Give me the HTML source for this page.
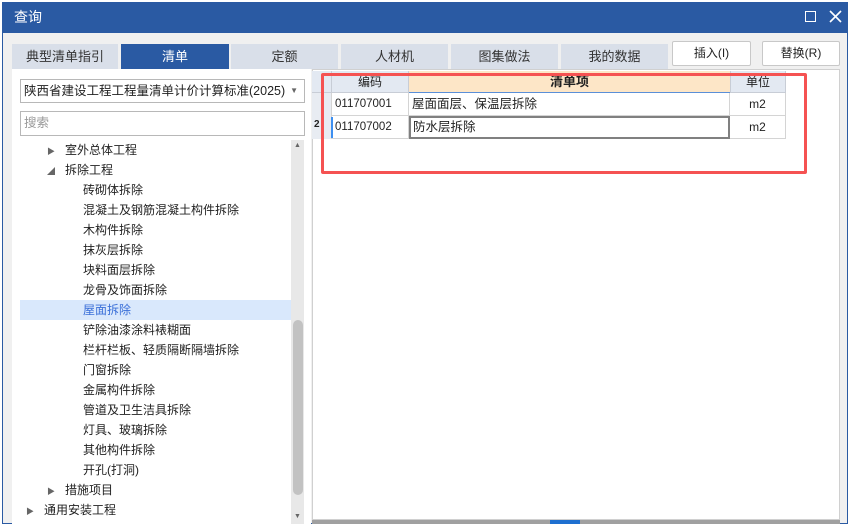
<!DOCTYPE html>
<html><head><meta charset="utf-8"><style>
*{margin:0;padding:0;box-sizing:border-box}
body{width:851px;height:524px;overflow:hidden;background:#fff;font-family:"Liberation Sans","Noto Sans CJK SC",sans-serif;font-size:12px;color:#222;position:relative}
.a{position:absolute}
.win{left:2px;top:2px;width:846px;height:522px;background:#f0f0f0;border:1px solid #2a5aa3}
.title{left:2px;top:2px;width:846px;height:31px;background:#2a5aa3;color:#fff;font-size:14px;line-height:31px;padding-left:12px}
.tab{top:44px;height:25px;background:#d9dfe9;text-align:center;line-height:25px;font-size:13px;color:#333}
.btn{top:41px;height:25px;background:#fff;border:1px solid #c8c8c8;border-radius:2px;text-align:center;line-height:23px;font-size:12px}
.tr{height:20px;line-height:20px;font-size:12px;white-space:nowrap}
.cell{border-right:1px solid #d4d4d4;border-bottom:1px solid #d4d4d4;height:23px;line-height:22px}
</style></head><body>
<div class="a win"></div>
<div class="a title">查询</div>
<div class="a" style="left:805px;top:11px;width:11px;height:11px;border:1.5px solid #fff"></div>
<svg class="a" style="left:829px;top:10px" width="13" height="13"><path d="M1 1L12 12M12 1L1 12" stroke="#fff" stroke-width="1.6"/></svg>

<div class="a tab" style="left:12px;width:106px">典型清单指引</div>
<div class="a tab" style="left:121px;width:108px;background:#2a5aa3;color:#fff">清单</div>
<div class="a tab" style="left:231px;width:107px">定额</div>
<div class="a tab" style="left:341px;width:107px">人材机</div>
<div class="a tab" style="left:451px;width:107px">图集做法</div>
<div class="a tab" style="left:561px;width:107px">我的数据</div>
<div class="a btn" style="left:672px;width:79px">插入(I)</div>
<div class="a btn" style="left:762px;width:78px">替换(R)</div>

<div class="a" style="left:12px;top:69px;width:299px;height:455px;background:#fff"></div>
<div class="a" style="left:20px;top:79px;width:285px;height:24px;border:1px solid #b8b8b8;line-height:22px;padding-left:3px;font-size:12.5px;background:#fff">陕西省建设工程工程量清单计价计算标准(2025)<span class="a" style="right:6px;top:0;font-size:8px;color:#666">▼</span></div>
<div class="a" style="left:20px;top:111px;width:285px;height:25px;border:1px solid #b8b8b8;line-height:23px;padding-left:3px;color:#999;font-size:12.5px;background:#fff">搜索</div>
<div class="a" style="left:291px;top:140px;width:13px;height:384px;background:#e8e8e8"></div>
<div class="a" style="left:293px;top:320px;width:10px;height:175px;background:#c2c2c2;border-radius:5px"></div>
<div class="a" style="left:294px;top:142px;font-size:7px;color:#666">▲</div>
<div class="a" style="left:294px;top:513px;font-size:7px;color:#666">▼</div>
<div class="a" style="left:20px;top:300px;width:271px;height:20px;background:#d9e8fc"></div>
<div class="a" style="left:0;top:140px">
<div class="tr" style="padding-left:47px"><span style="font-size:8px;color:#666">▶</span>&nbsp;&nbsp;&nbsp;室外总体工程</div>
<div class="tr" style="padding-left:47px"><span style="font-size:8px;color:#666">◢</span>&nbsp;&nbsp;&nbsp;拆除工程</div>
<div class="tr" style="padding-left:83px">砖砌体拆除</div>
<div class="tr" style="padding-left:83px">混凝土及钢筋混凝土构件拆除</div>
<div class="tr" style="padding-left:83px">木构件拆除</div>
<div class="tr" style="padding-left:83px">抹灰层拆除</div>
<div class="tr" style="padding-left:83px">块料面层拆除</div>
<div class="tr" style="padding-left:83px">龙骨及饰面拆除</div>
<div class="tr" style="padding-left:83px;color:#3a6fd8">屋面拆除</div>
<div class="tr" style="padding-left:83px">铲除油漆涂料裱糊面</div>
<div class="tr" style="padding-left:83px">栏杆栏板、轻质隔断隔墙拆除</div>
<div class="tr" style="padding-left:83px">门窗拆除</div>
<div class="tr" style="padding-left:83px">金属构件拆除</div>
<div class="tr" style="padding-left:83px">管道及卫生洁具拆除</div>
<div class="tr" style="padding-left:83px">灯具、玻璃拆除</div>
<div class="tr" style="padding-left:83px">其他构件拆除</div>
<div class="tr" style="padding-left:83px">开孔(打洞)</div>
<div class="tr" style="padding-left:47px"><span style="font-size:8px;color:#666">▶</span>&nbsp;&nbsp;&nbsp;措施项目</div>
<div class="tr" style="padding-left:26px"><span style="font-size:8px;color:#666">▶</span>&nbsp;&nbsp;&nbsp;通用安装工程</div>
</div>

<div class="a" style="left:312px;top:69px;width:528px;height:451px;background:#fff;border:1px solid #d0d0d0"></div>
<div class="a" style="left:312px;top:520px;width:528px;height:4px;background:#a0a0a0"></div>
<div class="a" style="left:550px;top:520px;width:30px;height:4px;background:#1e6fd0"></div>
<div class="a" style="left:312px;top:71px;width:20px;height:22px;background:#e3e9f2;border-right:1px solid #c8cdd6;border-bottom:1px solid #c8cdd6"></div>
<div class="a" style="left:332px;top:71px;width:77px;height:22px;background:#e3e9f2;border-right:1px solid #c8cdd6;border-bottom:1px solid #c8cdd6;text-align:center;line-height:22px">编码</div>
<div class="a" style="left:409px;top:71px;width:321px;height:22px;background:#fde6c7;border-bottom:1px solid #5a8fd8;text-align:center;line-height:22px;font-weight:bold;font-size:13px">清单项</div>
<div class="a" style="left:730px;top:71px;width:56px;height:22px;background:#e3e9f2;border-left:1px solid #c8cdd6;border-right:1px solid #c8cdd6;border-bottom:1px solid #c8cdd6;text-align:center;line-height:22px">单位</div>
<div class="a" style="left:312px;top:93px;width:20px;height:46px;background:#e8ecf2;border-right:1px solid #d4d4d4"></div>
<div class="a" style="left:314px;top:119px;font-size:10px;font-weight:bold">2</div>
<div class="a" style="left:331px;top:117px;width:2px;height:21px;background:#3d8ff0"></div>
<div class="a cell" style="left:332px;top:93px;width:77px;padding-left:3px;font-size:11.5px">011707001</div>
<div class="a cell" style="left:409px;top:93px;width:321px;padding-left:3px;font-size:12.5px">屋面面层、保温层拆除</div>
<div class="a cell" style="left:730px;top:93px;width:56px;text-align:center;font-size:12px">m2</div>
<div class="a cell" style="left:332px;top:116px;width:77px;padding-left:3px;font-size:11.5px">011707002</div>
<div class="a" style="left:409px;top:116px;width:321px;height:23px;border:2px solid #808080;padding-left:2px;line-height:19px;font-size:12.5px">防水层拆除</div>
<div class="a cell" style="left:730px;top:116px;width:56px;text-align:center;font-size:12px">m2</div>
<div class="a" style="left:321px;top:73px;width:486px;height:101px;border:3px solid #f55252;border-radius:2px"></div>
</body></html>
